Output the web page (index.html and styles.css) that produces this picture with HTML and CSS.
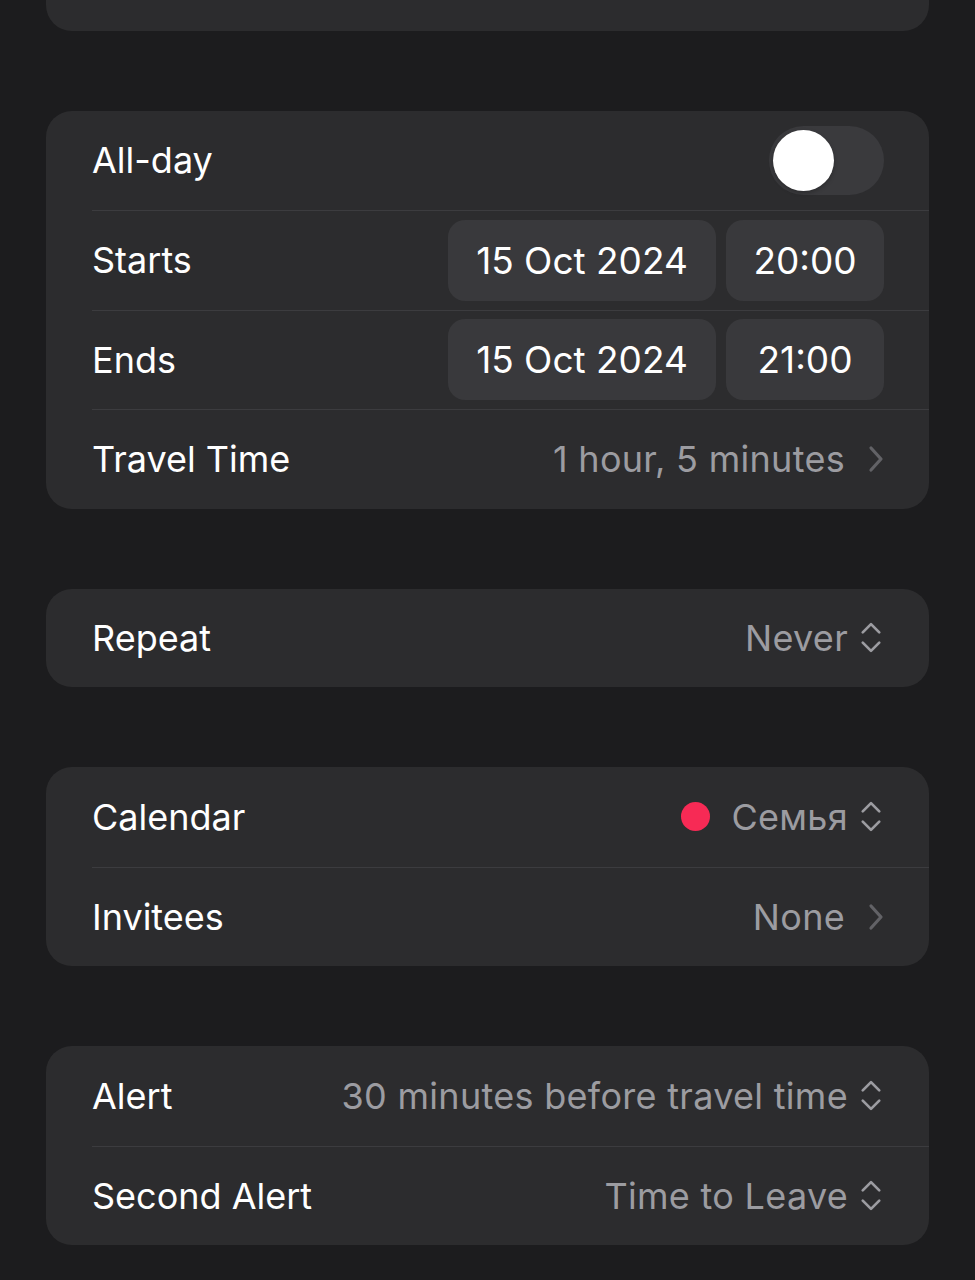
FILE: index.html
```html
<!DOCTYPE html>
<html lang="en">
<head>
    <meta charset="UTF-8">
    <meta name="viewport" content="width=device-width, initial-scale=1.0">
    <title>New Event</title>
    <link rel="stylesheet" href="styles.css">
</head>
<body>
    <main class="page">
        <section class="group group-cut">
            <div class="row row-cut">
                <span class="label">Suggested people, places and groups</span>
            </div>
        </section>

        <section class="group">
            <div class="row">
                <span class="label">All-day</span>
                <span class="toggle"><span class="knob"></span></span>
            </div>
            <div class="row">
                <span class="label">Starts</span>
                <div class="pills">
                    <span class="pill pill-date">15 Oct 2024</span>
                    <span class="pill pill-time">20:00</span>
                </div>
            </div>
            <div class="row">
                <span class="label">Ends</span>
                <div class="pills">
                    <span class="pill pill-date">15 Oct 2024</span>
                    <span class="pill pill-time">21:00</span>
                </div>
            </div>
            <div class="row">
                <span class="label">Travel Time</span>
                <span class="value">1 hour, 5 minutes
                    <svg class="chevron" viewBox="0 0 16 28"><path d="M3 3 L13 14 L3 25"/></svg>
                </span>
            </div>
        </section>

        <section class="group">
            <div class="row row-single">
                <span class="label">Repeat</span>
                <span class="value">Never
                    <svg class="updown" viewBox="0 0 24 32"><path d="M4 11 L12 3 L20 11 M4 21 L12 29 L20 21"/></svg>
                </span>
            </div>
        </section>

        <section class="group">
            <div class="row">
                <span class="label">Calendar</span>
                <span class="value"><span class="dot"></span>Семья
                    <svg class="updown" viewBox="0 0 24 32"><path d="M4 11 L12 3 L20 11 M4 21 L12 29 L20 21"/></svg>
                </span>
            </div>
            <div class="row">
                <span class="label">Invitees</span>
                <span class="value">None
                    <svg class="chevron" viewBox="0 0 16 28"><path d="M3 3 L13 14 L3 25"/></svg>
                </span>
            </div>
        </section>

        <section class="group">
            <div class="row">
                <span class="label">Alert</span>
                <span class="value">30 minutes before travel time
                    <svg class="updown" viewBox="0 0 24 32"><path d="M4 11 L12 3 L20 11 M4 21 L12 29 L20 21"/></svg>
                </span>
            </div>
            <div class="row">
                <span class="label">Second Alert</span>
                <span class="value">Time to Leave
                    <svg class="updown" viewBox="0 0 24 32"><path d="M4 11 L12 3 L20 11 M4 21 L12 29 L20 21"/></svg>
                </span>
            </div>
        </section>
    </main>
</body>
</html>
```

FILE: styles.css
```css
* {
    margin: 0;
    padding: 0;
    box-sizing: border-box;
}
body {
    font-family: 'Inter', 'Noto Sans', sans-serif;
    background-color: #1c1c1e;
    color: #fff;
    overflow: hidden;
}
.page {
    padding: 0 46px;
    display: flex;
    flex-direction: column;
    gap: 80px;
}
.group {
    background-color: #2c2c2e;
    border-radius: 26px;
}
.group-cut {
    margin-top: -69px;
}
.row {
    margin-left: 46px;
    padding-right: 45px;
    height: 99.5px;
    display: flex;
    align-items: center;
    justify-content: space-between;
}
.row-cut {
    padding-bottom: 6px;
}
.row-single {
    height: 98.5px;
}
.row + .row {
    border-top: 1px solid #3c3c3f;
}
.label {
    font-size: 36px;
}
.value {
    display: flex;
    align-items: center;
    font-size: 36px;
    letter-spacing: 0.3px;
    color: #9c9ca1;
}
.chevron {
    width: 16px;
    height: 28px;
    margin-left: 23px;
    fill: none;
    stroke: #626266;
    stroke-width: 3.2;
    stroke-linecap: round;
    stroke-linejoin: round;
}
.updown {
    width: 26px;
    height: 33px;
    margin-left: 10px;
    fill: none;
    stroke: #9c9ca1;
    stroke-width: 2.6;
    stroke-linecap: round;
    stroke-linejoin: round;
}
.dot {
    width: 29px;
    height: 29px;
    border-radius: 50%;
    background-color: #f72a55;
    margin-right: 21px;
}
.toggle {
    width: 115px;
    height: 69px;
    border-radius: 35px;
    background-color: #3a3a3d;
    padding: 4px;
    display: flex;
}
.knob {
    width: 61px;
    height: 61px;
    border-radius: 50%;
    background-color: #fff;
    box-shadow: 0 2px 4px rgba(0, 0, 0, 0.25);
}
.pills {
    display: flex;
    gap: 10px;
}
.pill {
    height: 81px;
    border-radius: 17px;
    background-color: #39393c;
    font-size: 37px;
    display: flex;
    align-items: center;
    justify-content: center;
}
.pill-date {
    width: 268px;
}
.pill-time {
    width: 158px;
}
```
